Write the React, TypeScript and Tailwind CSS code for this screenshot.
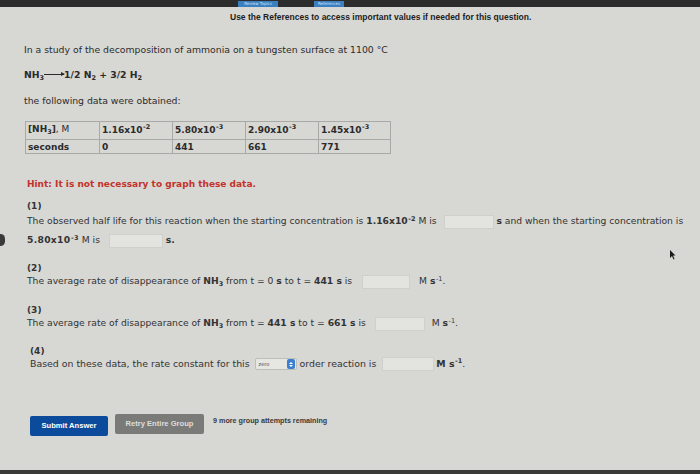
import { ReactNode } from "react";

const Sup = ({ children }: { children: ReactNode }) => (
  <sup className="text-[6.5px] relative -top-[3.5px] ml-[0.5px]">{children}</sup>
);

const Sub = ({ children }: { children: ReactNode }) => (
  <sub className="text-[6.5px] relative top-[1.5px]">{children}</sub>
);

const Box = ({ w }: { w: string }) => (
  <span
    className={`inline-block align-middle h-[14px] bg-[#e3e3e0] border border-[#cfcfcc] ${w}`}
  />
);

const dv = { fontFamily: '"DejaVu Sans", Verdana, sans-serif' };

const Label = ({ n }: { n: string }) => (
  <p className="font-bold text-[9px] leading-[12px] h-[12px]">{n}</p>
);

const App = () => {
  return (
    <div
      className="relative w-[700px] h-[474px] overflow-hidden bg-[#d7d7d4] text-[#2b2b2b]"
      style={dv}
    >
      {/* top frame bar */}
      <div className="h-[7px] bg-[#2c2c2c] flex items-end">
        <div className="ml-[238px] w-[40px] h-[6px] bg-[#3c7fc1] text-[4px] leading-[6px] text-center text-[#cfe3f7]">
          Review Topics
        </div>
        <div className="ml-[36px] w-[30px] h-[6px] bg-[#3c7fc1] text-[4px] leading-[6px] text-center text-[#cfe3f7]">
          References
        </div>
      </div>

      <div
        className="pl-[230px] mt-[5px] leading-[10px] text-[8.5px] font-bold text-[#1e1e1e]"
        style={{ fontFamily: '"Liberation Sans", Arial, sans-serif' }}
      >
        Use the References to access important values if needed for this question.
      </div>

      <div className="pl-[24px] text-[9.3px]">
        <p className="mt-[22px] leading-[12px]">
          In a study of the decomposition of ammonia on a tungsten surface at 1100 °C
        </p>
        <p className="mt-[13px] leading-[12px] font-bold">
          NH<Sub>3</Sub>
          <span className="inline-block align-middle w-[20px] h-[1px] bg-[#2b2b2b] relative -top-[1px]">
            <span className="absolute -right-[1px] -top-[2px] border-l-[4px] border-l-[#2b2b2b] border-y-[2.5px] border-y-transparent" />
          </span>
          1/2 N<Sub>2</Sub> + 3/2 H<Sub>2</Sub>
        </p>
        <p className="mt-[14px] leading-[12px]">the following data were obtained:</p>

        <table className="mt-[14px] ml-[1px] border-collapse text-[9px] font-bold">
          <tbody>
            <tr className="h-[18px]">
              <td className="w-[74px] border border-[#a9a9a7] pl-[2px] align-top pt-[1px] font-normal">
                <span className="font-bold">[NH<Sub>3</Sub>]</span>, M
              </td>
              <td className="w-[73px] border border-[#a9a9a7] pl-[2px]">
                1.16x10<Sup>-2</Sup>
              </td>
              <td className="w-[73px] border border-[#a9a9a7] pl-[2px]">
                5.80x10<Sup>-3</Sup>
              </td>
              <td className="w-[73px] border border-[#a9a9a7] pl-[2px]">
                2.90x10<Sup>-3</Sup>
              </td>
              <td className="w-[72px] border border-[#a9a9a7] pl-[2px]">
                1.45x10<Sup>-3</Sup>
              </td>
            </tr>
            <tr className="h-[14px] leading-[12px]">
              <td className="border border-[#a9a9a7] pl-[2px]">seconds</td>
              <td className="border border-[#a9a9a7] pl-[2px]">0</td>
              <td className="border border-[#a9a9a7] pl-[2px]">441</td>
              <td className="border border-[#a9a9a7] pl-[2px]">661</td>
              <td className="border border-[#a9a9a7] pl-[2px]">771</td>
            </tr>
          </tbody>
        </table>

        <p className="mt-[24px] leading-[12px] pl-[3px] font-bold text-[#c2322c] text-[9px]">
          Hint: It is not necessary to graph these data.
        </p>
      </div>

      {/* questions */}
      <div className="pl-[27px] text-[9.2px] text-[#333]">
        <div className="mt-[10px]">
          <Label n="(1)" />
          <p className="mt-[2px] leading-[14px] h-[14px]">
            The observed half life for this reaction when the starting concentration is{" "}
            <b>
              1.16x10<Sup>-2</Sup>
            </b>{" "}
            M is <Box w="w-[50px] ml-[4px]" /> <b>s</b> and when the starting concentration is
          </p>
          <p className="mt-[5px] leading-[14px] h-[14px]">
            <b className="tracking-[0.3px]">
              5.80x10<Sup>-3</Sup>
            </b>{" "}
            M is <Box w="w-[54px] ml-[6px]" /> <b>s.</b>
          </p>
        </div>

        <div className="mt-[15px]">
          <Label n="(2)" />
          <p className="leading-[14px] h-[14px]">
            The average rate of disappearance of <b>NH<Sub>3</Sub></b> from t = 0 <b>s</b> to t ={" "}
            <b>441 s</b> is <Box w="w-[48px] ml-[7px]" />
            <span className="ml-[9px]">
              M <b>s</b>
              <Sup>-1</Sup>.
            </span>
          </p>
        </div>

        <div className="mt-[16px]">
          <Label n="(3)" />
          <p className="leading-[14px] h-[14px]">
            The average rate of disappearance of <b>NH<Sub>3</Sub></b> from t = <b>441 s</b> to t ={" "}
            <b>661 s</b> is <Box w="w-[50px] ml-[6px]" />
            <span className="ml-[7px]">
              M <b>s</b>
              <Sup>-1</Sup>.
            </span>
          </p>
        </div>

        <div className="mt-[16px] pl-[3px]">
          <p className="font-bold text-[9px] leading-[11px] h-[11px]">(4)</p>
          <p className="leading-[12px] h-[12px] text-[9.4px]">
            Based on these data, the rate constant for this{" "}
            <span className="inline-flex align-middle items-center h-[12px] w-[42px] ml-[2px] bg-[#e6e6e3] border border-[#bdbdba] rounded-[2px]">
              <span className="flex-1 text-[5px] leading-[5px] pl-[3px] text-[#444]">zero</span>
              <span className="w-[8px] h-[10px] mr-[1px] bg-[#3b7fd0] rounded-[2px] flex flex-col items-center justify-center gap-[1px]">
                <span className="border-b-[2px] border-b-white border-x-[2px] border-x-transparent" />
                <span className="border-t-[2px] border-t-white border-x-[2px] border-x-transparent" />
              </span>
            </span>{" "}
            order reaction is <Box w="w-[52px] ml-[3px]" />
            <b className="ml-[2px]">
              M s<Sup>-1</Sup>
            </b>
            .
          </p>
        </div>

        <div
          className="mt-[46px] flex items-start gap-[7px] pl-[3px]"
          style={{ fontFamily: '"Liberation Sans", Arial, sans-serif' }}
        >
          <button className="w-[78px] h-[20px] mt-[1px] bg-[#0c4b9b] rounded-[2px] text-white text-[7.6px] font-bold">
            Submit Answer
          </button>
          <button className="w-[89px] h-[20px] -mt-[1px] bg-[#7a7a79] rounded-[2px] text-[#dedede] text-[7.6px] font-bold">
            Retry Entire Group
          </button>
          <span className="text-[7.2px] leading-[10px] font-bold text-[#3a3a3a] mt-[1px] ml-[2px]">
            9 more group attempts remaining
          </span>
        </div>
      </div>

      {/* photo edge details */}
      <div className="absolute left-[-4px] top-[234px] w-[9px] h-[12px] rounded-full bg-[#3a3a3a]" />
      <svg className="absolute left-[669px] top-[250px]" width="7" height="10" viewBox="0 0 7 10">
        <path d="M1 0 L1 8 L3 6 L4.5 9.5 L5.5 9 L4 5.5 L6.5 5.5 Z" fill="#1a1a1a" />
      </svg>
      <div className="absolute left-0 bottom-0 w-full h-[4px] bg-[#3a3a38]" />
    </div>
  );
};

export default App;
